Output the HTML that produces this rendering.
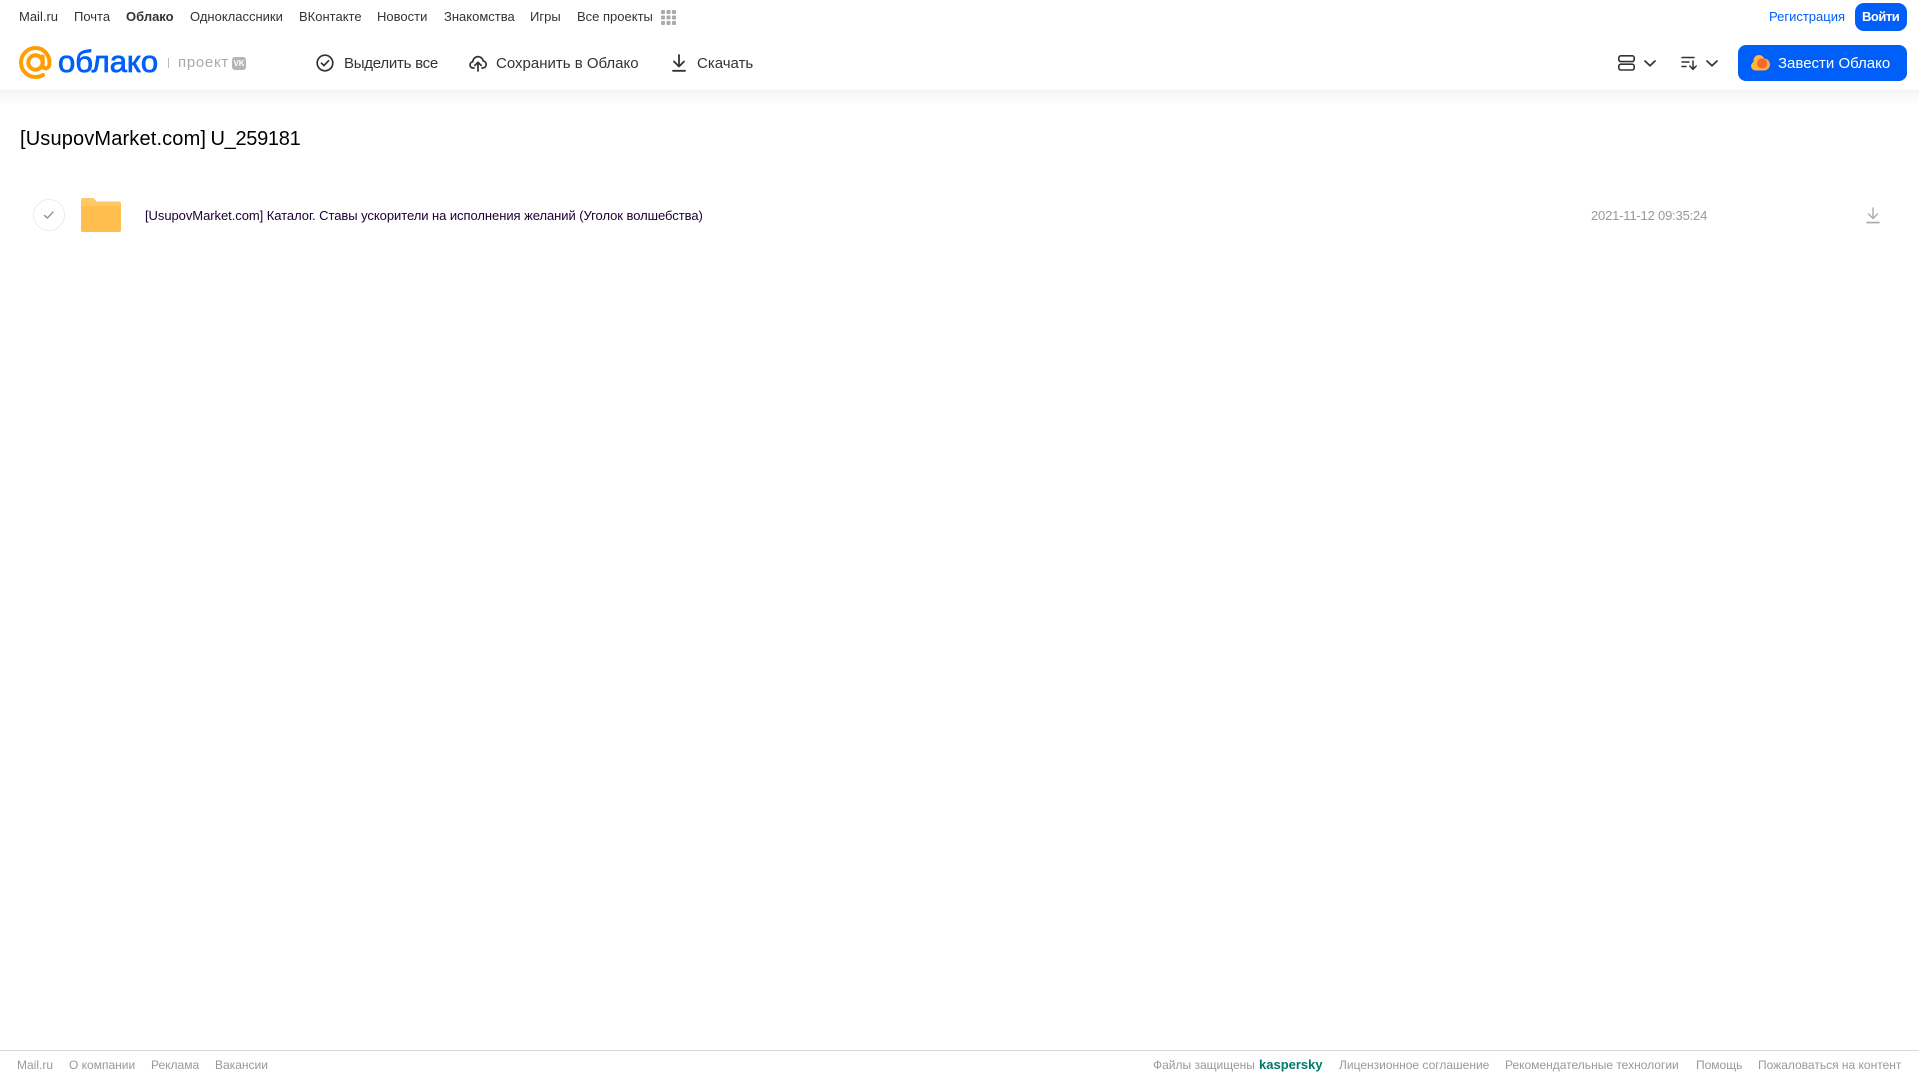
<!DOCTYPE html>
<html lang="ru">
<head>
<meta charset="utf-8">
<title>Облако</title>
<style>
html,body{margin:0;padding:0;background:#fff;width:1919px;height:1079px;overflow:hidden;font-family:"Liberation Sans","Noto Sans CJK SC",sans-serif;}
.t{position:absolute;white-space:nowrap;line-height:16px;}
.n{font-size:13px;color:#333;top:9px;}
.a{font-size:15px;color:#333;top:56px;line-height:16px;}
.f{font-size:12px;color:#999;top:1057px;}
svg{position:absolute;overflow:visible;}
</style>
</head>
<body>
<div style="position:absolute;left:0;top:91px;width:1919px;height:14px;background:linear-gradient(#f5f5f5,#fff);"></div>
<div style="position:absolute;left:0;top:90px;width:1919px;height:1px;background:#f0f0f0;"></div>

<span class="t n" style="left:19px">Mail.ru</span>
<span class="t n" style="left:74px">Почта</span>
<span class="t n" style="left:126px;font-weight:bold">Облако</span>
<span class="t n" style="left:190px">Одноклассники</span>
<span class="t n" style="left:299px">ВКонтакте</span>
<span class="t n" style="left:377px">Новости</span>
<span class="t n" style="left:444px">Знакомства</span>
<span class="t n" style="left:530px">Игры</span>
<span class="t n" style="left:577px">Все проекты</span>
<svg style="left:661px;top:10px" width="15" height="15" viewBox="0 0 15 15" fill="#aaa">
<rect x="0" y="0" width="4" height="4" rx="1"/><rect x="5.5" y="0" width="4" height="4" rx="1"/><rect x="11" y="0" width="4" height="4" rx="1"/>
<rect x="0" y="5.5" width="4" height="4" rx="1"/><rect x="5.5" y="5.5" width="4" height="4" rx="1"/><rect x="11" y="5.5" width="4" height="4" rx="1"/>
<rect x="0" y="11" width="4" height="4" rx="1"/><rect x="5.5" y="11" width="4" height="4" rx="1"/><rect x="11" y="11" width="4" height="4" rx="1"/>
</svg>

<span class="t n" style="left:1769px;color:#005ff9">Регистрация</span>
<div style="position:absolute;left:1855px;top:3px;width:52px;height:28px;background:#005ff9;border-radius:9px;"></div>
<span class="t n" style="left:1862px;color:#fff;font-weight:bold;letter-spacing:-.5px">Войти</span>

<!-- logo -->
<svg style="left:19px;top:46px" width="33" height="34" viewBox="0 0 33 34" fill="none">
<circle cx="16.5" cy="16.5" r="7.2" stroke="#ff9e00" stroke-width="4"/>
<path d="M23.7 10.5V19.5C23.7 23.5 29.8 23.5 30.4 18.5C31.4 9 24.5 2 16.5 2C8.5 2 2 8.5 2 16.5C2 24.5 8.5 31 16.5 31C19.5 31 22 30.2 24 29" stroke="#ff9e00" stroke-width="4" stroke-linecap="round"/>
</svg>
<span class="t" style="left:58px;top:44px;font-size:31px;line-height:36px;color:#005ff9;-webkit-text-stroke:.8px #005ff9;">облако</span>
<div style="position:absolute;left:168px;top:58px;width:1px;height:10px;background:#bbb;"></div>
<span class="t" style="left:178px;top:55px;font-size:15px;color:#aaa;letter-spacing:.7px;">проект</span>
<div style="position:absolute;left:232px;top:57px;width:14px;height:13px;background:#b5b5b5;border-radius:3px;color:#fff;font-size:8px;line-height:13px;text-align:center;font-weight:bold;">VK</div>

<!-- actions -->
<svg style="left:316px;top:54px" width="18" height="18" viewBox="0 0 18 18" fill="none" stroke="#333" stroke-width="1.7">
<circle cx="9" cy="9" r="7.8"/><path d="M5.5 9.2L8 11.6L12.5 6.8" stroke-linecap="round" stroke-linejoin="round"/>
</svg>
<span class="t a" style="left:344px;letter-spacing:-.25px">Выделить все</span>
<svg style="left:469px;top:54px" width="18" height="18" viewBox="0 0 18 18" fill="none" stroke="#333" stroke-width="1.7" stroke-linecap="round" stroke-linejoin="round">
<path d="M5 14H4.2C2.3 14 1 12.6 1 10.9C1 9.3 2.1 8.1 3.6 7.9C4 4.9 6.3 2.6 9 2.6C11.6 2.6 13.6 4.4 14.3 7C16 7.3 17.2 8.8 17.2 10.5C17.2 12.4 15.7 14 13.8 14H13"/>
<path d="M9 17V8.5M5.9 11.4L9 8.3L12.1 11.4"/>
</svg>
<span class="t a" style="left:496px">Сохранить в Облако</span>
<svg style="left:671px;top:54px" width="16" height="18" viewBox="0 0 16 18" fill="none" stroke="#333" stroke-width="1.8" stroke-linecap="round" stroke-linejoin="round">
<path d="M8 1V12M3 7.5L8 12.5L13 7.5"/><path d="M2 16.8H14"/>
</svg>
<span class="t a" style="left:697px">Скачать</span>

<!-- right toolbar -->
<svg style="left:1618px;top:55px" width="17" height="16" viewBox="0 0 17 16" fill="none" stroke="#333" stroke-width="1.6">
<rect x=".8" y=".8" width="15.4" height="5.8" rx="2"/><rect x=".8" y="9.2" width="15.4" height="5.8" rx="2"/>
</svg>
<svg style="left:1644px;top:60px" width="12" height="7" viewBox="0 0 12 7" fill="none" stroke="#333" stroke-width="1.7" stroke-linecap="round" stroke-linejoin="round"><path d="M1 1L6 5.8L11 1"/></svg>
<svg style="left:1681px;top:56px" width="17" height="15" viewBox="0 0 17 15" fill="none" stroke="#333" stroke-width="1.5" stroke-linecap="round" stroke-linejoin="round">
<path d="M1 1.5H13M1 6H8M1 10.5H5"/><path d="M12 5V13M8.8 10L12 13.3L15.2 10"/>
</svg>
<svg style="left:1706px;top:60px" width="12" height="7" viewBox="0 0 12 7" fill="none" stroke="#333" stroke-width="1.7" stroke-linecap="round" stroke-linejoin="round"><path d="M1 1L6 5.8L11 1"/></svg>

<div style="position:absolute;left:1738px;top:45px;width:169px;height:36px;background:#005ff9;border-radius:8px;"></div>
<svg style="left:1751px;top:55px" width="19" height="16" viewBox="0 0 19 16">
<circle cx="4.5" cy="11" r="4.5" fill="#ffb340"/>
<circle cx="8" cy="5.5" r="5.5" fill="#ffb340"/>
<circle cx="13" cy="9.5" r="6" fill="#ffa54a"/>
<rect x="4.5" y="9" width="9" height="6.5" fill="#ffb340"/>
<circle cx="11" cy="8.5" r="5" fill="#f5672a"/>
</svg>
<span class="t a" style="left:1778px;color:#fff">Завести Облако</span>

<!-- content -->
<span class="t" style="left:20px;top:127px;font-size:20px;line-height:24px;color:#000;letter-spacing:.15px">[UsupovMarket.com]</span>
<span class="t" style="left:210.5px;top:127px;font-size:20px;line-height:24px;color:#000;letter-spacing:-.3px">U_259181</span>

<div style="position:absolute;left:33px;top:199px;width:30px;height:30px;border:1px solid #ececec;border-radius:50%;"></div>
<svg style="left:43px;top:210px" width="12" height="10" viewBox="0 0 12 10" fill="none" stroke="#999" stroke-width="1.5" stroke-linecap="round" stroke-linejoin="round"><path d="M1.5 5.5L4.5 8L10 2"/></svg>

<svg style="left:81px;top:198px" width="40" height="34" viewBox="0 0 40 34">
<path d="M2 0H11C13 0 13.5 1 14.5 2.2C15.3 3.2 16 3.5 17 3.5H38C39.2 3.5 40 4.3 40 5.5V32C40 33.2 39.2 34 38 34H2C.8 34 0 33.2 0 32V2C0 .8.8 0 2 0Z" fill="#ffc766"/>
<path d="M0 8H40V32C40 33.2 39.2 34 38 34H2C.8 34 0 33.2 0 32Z" fill="#ffbe4d"/>
</svg>

<span class="t" style="left:145px;top:208px;font-size:13px;color:#1a0033;letter-spacing:-.055px">[UsupovMarket.com] Каталог. Ставы ускорители на исполнения желаний (Уголок волшебства)</span>
<span class="t" style="left:1591px;top:208px;font-size:13px;color:#999;letter-spacing:-.19px">2021-11-12 09:35:24</span>
<svg style="left:1866px;top:207px" width="14" height="17" viewBox="0 0 14 17" fill="none" stroke="#aaa" stroke-width="1.4" stroke-linecap="round" stroke-linejoin="round">
<path d="M7 1V11.5M2.5 7L7 11.5L11.5 7"/><path d="M1 15.6H13" stroke-width="1.6"/>
</svg>

<!-- footer -->
<div style="position:absolute;left:0;top:1050px;width:1919px;height:1px;background:#d8d8d8;"></div>
<span class="t f" style="left:17px">Mail.ru</span>
<span class="t f" style="left:69px">О компании</span>
<span class="t f" style="left:151px">Реклама</span>
<span class="t f" style="left:215px">Вакансии</span>
<span class="t f" style="left:1153px">Файлы защищены</span>
<span class="t f" style="left:1259px;font-size:13px;font-weight:bold;color:#007a66;">kaspersky</span>
<span class="t f" style="left:1339px">Лицензионное соглашение</span>
<span class="t f" style="left:1505px">Рекомендательные технологии</span>
<span class="t f" style="left:1696px">Помощь</span>
<span class="t f" style="left:1758px">Пожаловаться на контент</span>
</body>
</html>
